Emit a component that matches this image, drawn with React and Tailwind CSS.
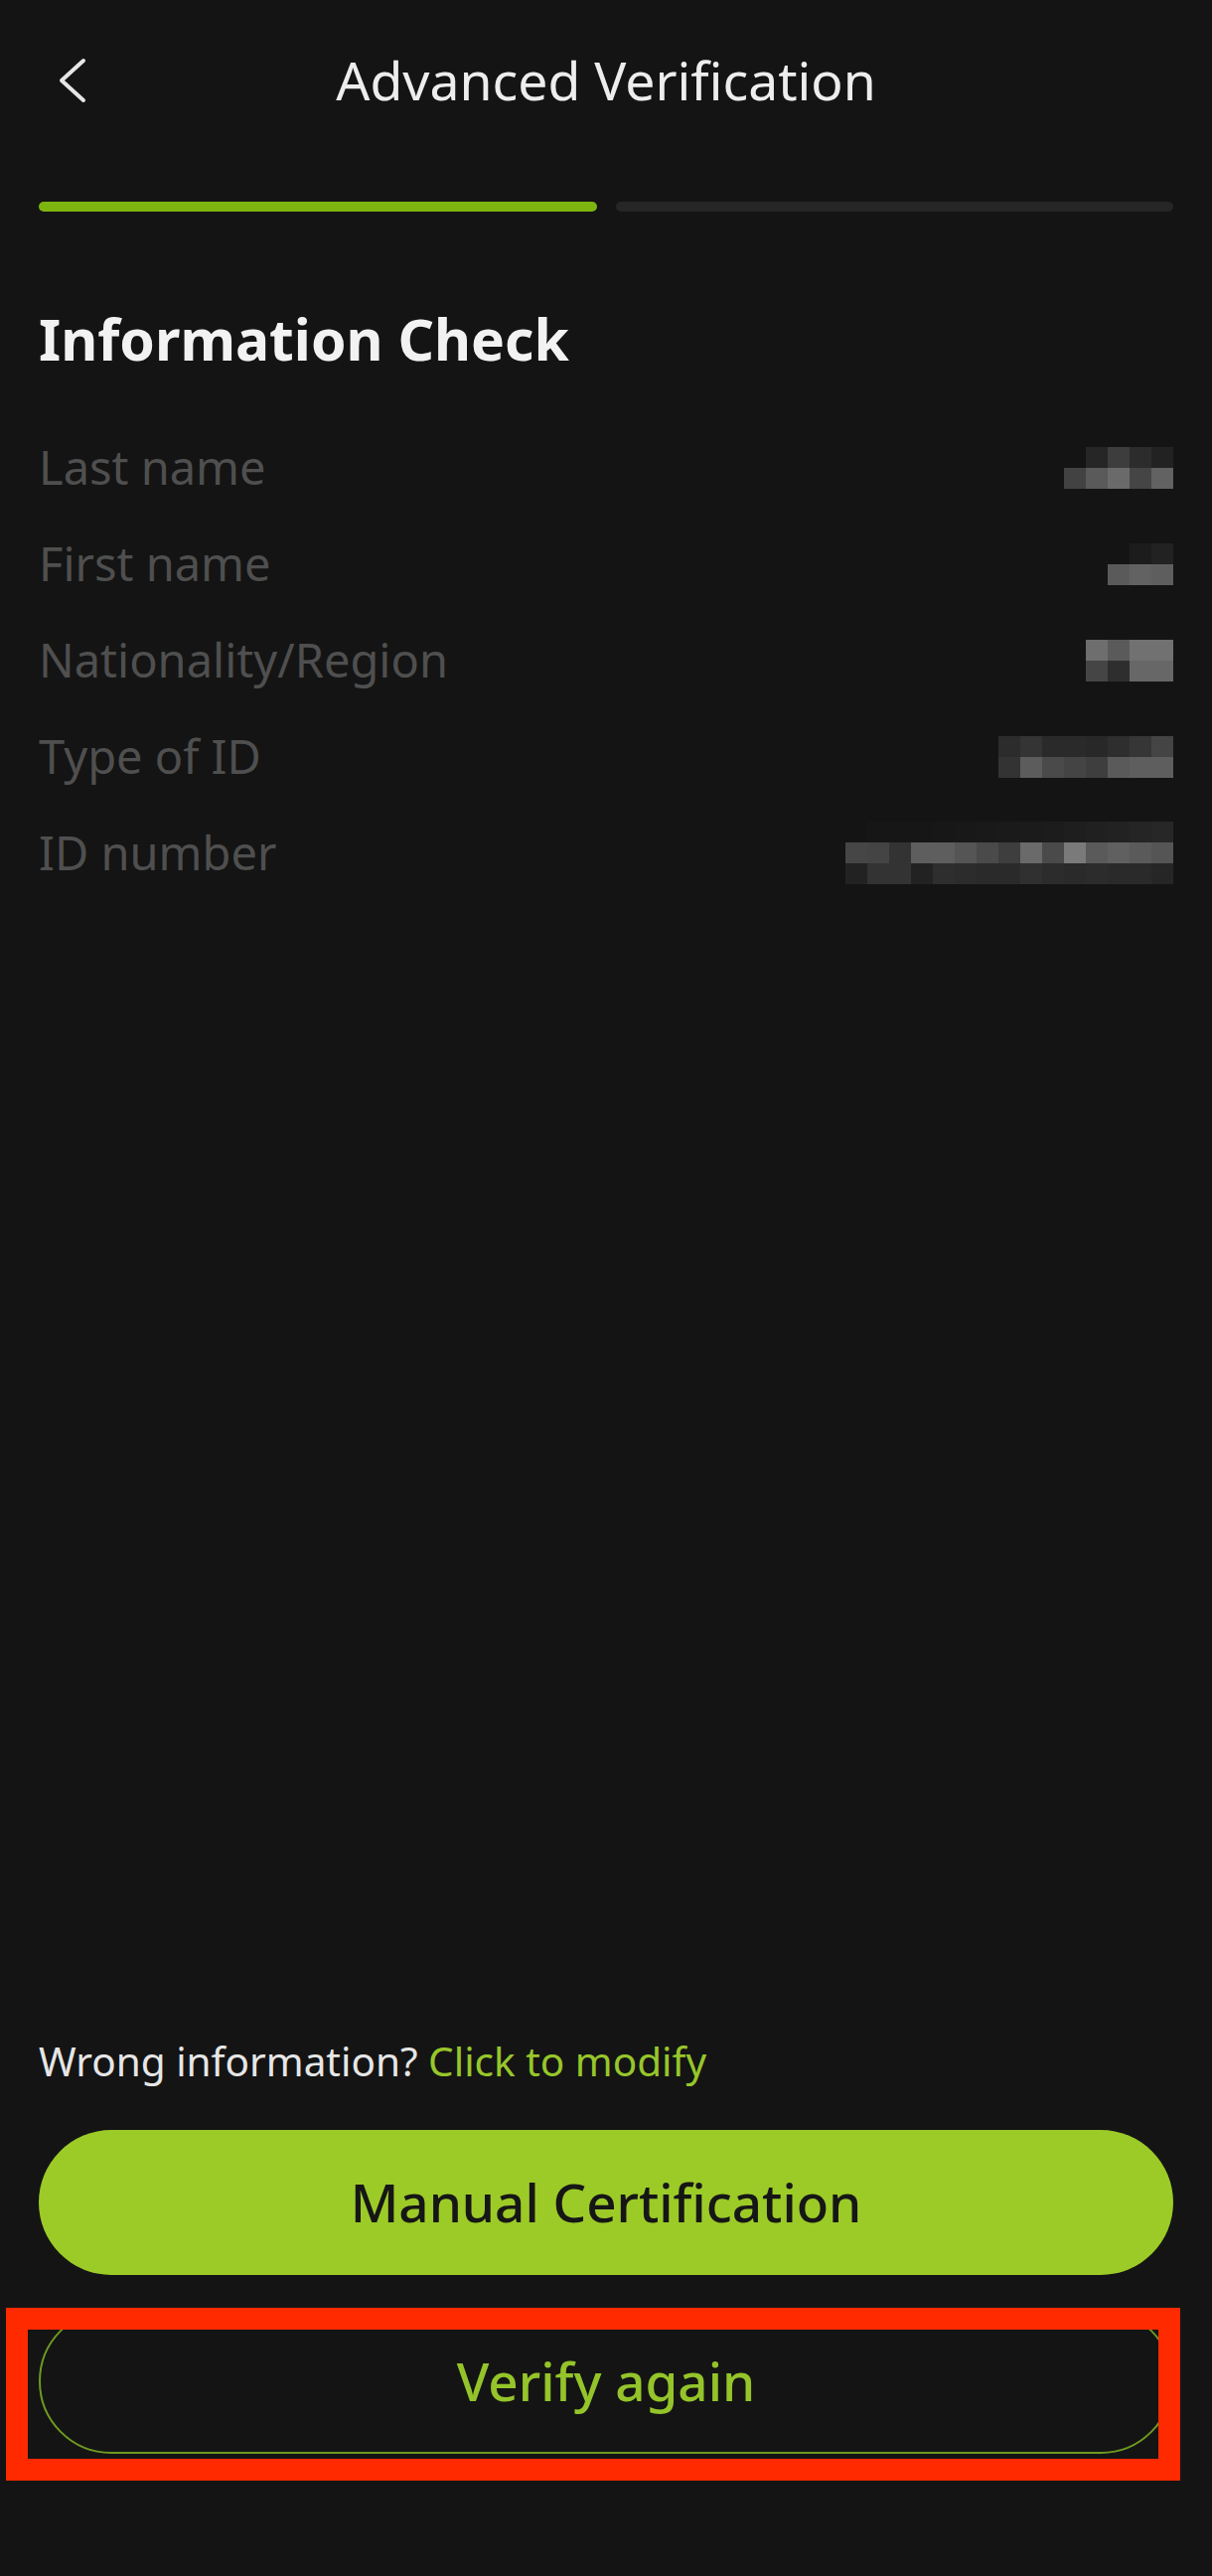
import React from 'react';

// pixelated (redacted) values, one array per row of blocks
const fields = [
  {
    label: 'Last name',
    mosaic: [
      ['#141414', '#262626', '#3d3d3d', '#2c2c2c', '#222222'],
      ['#424242', '#5a5a5a', '#6a6a6a', '#454545', '#626262'],
    ],
  },
  {
    label: 'First name',
    mosaic: [
      ['#141414', '#141414', '#1c1c1c', '#222222'],
      ['#141414', '#5a5a5a', '#626262', '#5e5e5e'],
    ],
  },
  {
    label: 'Nationality/Region',
    mosaic: [
      ['#6e6e6e', '#5a5a5a', '#717171', '#717171'],
      ['#454545', '#2e2e2e', '#676767', '#676767'],
    ],
  },
  {
    label: 'Type of ID',
    mosaic: [
      ['#2c2c2c', '#343434', '#2a2a2a', '#2a2a2a', '#282828', '#2e2e2e', '#363636', '#444444'],
      ['#333333', '#5c5c5c', '#4a4a4a', '#444444', '#3e3e3e', '#5a5a5a', '#5e5e5e', '#5e5e5e'],
    ],
  },
  {
    label: 'ID number',
    mosaic: [
      ['#141414', '#161616', '#161616', '#161616', '#171717', '#181818', '#191919', '#1a1a1a', '#1b1b1b', '#1c1c1c', '#1e1e1e', '#202020', '#222222', '#252525', '#272727'],
      ['#464646', '#444444', '#333333', '#5e5e5e', '#5e5e5e', '#555555', '#4a4a4a', '#3e3e3e', '#6a6a6a', '#4a4a4a', '#7a7a7a', '#5a5a5a', '#606060', '#5a5a5a', '#555555'],
      ['#222222', '#333333', '#333333', '#222222', '#2e2e2e', '#2c2c2c', '#2a2a2a', '#2a2a2a', '#303030', '#2c2c2c', '#2a2a2a', '#2c2c2c', '#2a2a2a', '#2a2a2a', '#262626'],
    ],
  },
];

function Mosaic({ rows }) {
  return (
    <div className="flex flex-col blur-[0.6px]">
      {rows.map((row, i) => (
        <div key={i} className="flex">
          {row.map((c, j) => (
            <div key={j} className="w-[22px] h-[21px]" style={{ backgroundColor: c }} />
          ))}
        </div>
      ))}
    </div>
  );
}

export default function App() {
  return (
    <div className="min-h-[2593px] w-full bg-[#141414] flex flex-col font-['Noto_Sans',sans-serif]">
      {/* Header */}
      <div className="h-[162px] grid grid-cols-[1fr_auto_1fr] items-center">
        <div className="pl-[58px]">
          <svg width="30" height="46" viewBox="0 0 30 46" fill="none">
            <polyline points="26,3 4,23 26,43" stroke="#e6e6e6" strokeWidth="4" strokeLinecap="round" strokeLinejoin="round" />
          </svg>
        </div>
        <h1 className="text-[53.5px] leading-none text-[#ededed] font-normal">Advanced Verification</h1>
        <div />
      </div>

      {/* Progress */}
      <div className="mt-[41px] px-[39px] flex gap-[19px]">
        <div className="flex-1 h-[10px] rounded-full bg-[#7db40f]" />
        <div className="flex-1 h-[10px] rounded-full bg-[#262626]" />
      </div>

      <h2 className="mt-[90px] px-[39px] text-[57px] leading-[76px] font-bold text-[#f2f2f2]">Information Check</h2>

      <div className="mt-[43px] px-[39px] flex flex-col">
        {fields.map((f) => (
          <div key={f.label} className="h-[97px] flex items-center justify-between">
            <span className="text-[47px] text-[#4f4f4f]">{f.label}</span>
            <Mosaic rows={f.mosaic} />
          </div>
        ))}
      </div>

      <div className="flex-1" />

      {/* Bottom actions */}
      <div className="px-[39px] pb-[123px] flex flex-col">
        <p className="text-[40.5px] leading-[56px] text-[#e6e6e6]">
          Wrong information? <span className="text-[#97c62b]">Click to modify</span>
        </p>
        <button className="mt-[41px] h-[146px] w-full rounded-full bg-[#9ccb28] text-[#161616] text-[53px] font-medium">
          Manual Certification
        </button>
        <div className="relative mt-[34px]">
          <button className="h-[146px] w-full rounded-full border-2 border-[#6e9a22] text-[#94c42a] text-[53px] font-medium">
            Verify again
          </button>
          <div className="absolute -left-[33px] -top-[1px] w-[1182px] h-[174px] border-[22px] border-[#ff2a00] pointer-events-none" />
        </div>
      </div>
    </div>
  );
}
